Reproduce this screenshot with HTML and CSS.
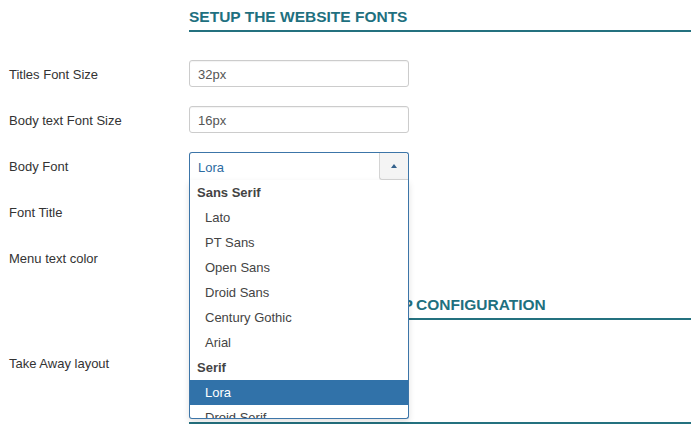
FILE: index.html
```html
<!DOCTYPE html>
<html lang="en">
<head>
  <meta charset="UTF-8">
  <meta name="viewport" content="width=device-width, initial-scale=1">
  <title>Website Fonts</title>
  <link rel="stylesheet" href="styles.css">
</head>
<body>

<form class="settings">
  <h3 class="section-title first">Setup the website fonts</h3>

  <div class="row">
    <label>Titles Font Size</label>
    <input class="field" type="text" value="32px">
  </div>

  <div class="row">
    <label>Body text Font Size</label>
    <input class="field" type="text" value="16px">
  </div>

  <div class="row">
    <label>Body Font</label>
    <div class="chosen open">
      <div class="chosen-single">
        <span>Lora</span>
        <b class="chosen-arrow"></b>
      </div>
      <ul class="chosen-results">
        <li class="group">Sans Serif</li>
        <li>Lato</li>
        <li>PT Sans</li>
        <li>Open Sans</li>
        <li>Droid Sans</li>
        <li>Century Gothic</li>
        <li>Arial</li>
        <li class="group">Serif</li>
        <li class="active">Lora</li>
        <li>Droid Serif</li>
        <li>Playfair Display</li>
      </ul>
    </div>
  </div>

  <div class="row">
    <label>Font Title</label>
    <input class="field" type="text" value="">
  </div>

  <div class="row">
    <label>Menu text color</label>
    <input class="field" type="text" value="">
  </div>

  <h3 class="section-title second">Setup the take away shop configuration</h3>

  <div class="row">
    <label>Take Away layout</label>
    <input class="field" type="text" value="">
  </div>

  <h3 class="section-title third">&nbsp;</h3>
</form>

</body>
</html>
```

FILE: styles.css
```css
body {
  margin: 0;
  font-family: "Liberation Sans", Arial, sans-serif;
  font-size: 13px;
  color: #333;
  background: #fff;
}

.settings {
  padding-left: 9px;
}

.section-title {
  margin: 0 0 0 180px;
  padding-bottom: 4px;
  font-size: 15.5px;
  line-height: 18px;
  font-weight: bold;
  text-transform: uppercase;
  color: #1e7080;
  border-bottom: 2px solid #24717f;
  white-space: nowrap;
}

.section-title.first {
  margin-top: 8px;
  margin-bottom: 28px;
}

.section-title.second {
  margin-top: 25px;
  margin-bottom: 29px;
  word-spacing: -1px;
}

.section-title.third {
  margin-top: 24px;
}

.row {
  display: flex;
  align-items: center;
  height: 27px;
  margin-bottom: 19px;
}

.row:last-of-type {
  margin-bottom: 0;
}

.row label {
  width: 180px;
  flex-shrink: 0;
  padding-top: 2px;
}

.field {
  box-sizing: border-box;
  width: 220px;
  height: 27px;
  padding: 2px 8px 0;
  border: 1px solid #ccc;
  border-radius: 3px;
  font-family: inherit;
  font-size: 13px;
  color: #555;
  box-shadow: inset 0 1px 1px rgba(0,0,0,0.05);
}

/* dropdown, open state */
.chosen {
  position: relative;
  width: 220px;
  height: 27px;
  z-index: 10;
}

.chosen-single {
  box-sizing: border-box;
  height: 28px;
  padding: 1px 0 0 8px;
  border: 1px solid #3c75a8;
  border-bottom: none;
  border-radius: 3px 3px 0 0;
  background: #fff;
  color: #2d6ba1;
  line-height: 27px;
  position: relative;
}

.chosen-arrow {
  position: absolute;
  top: 0;
  right: 0;
  width: 28px;
  height: 26px;
  background: #f4f4f4;
  border-left: 1px solid #d4d4d4;
  border-bottom: 1px solid #d4d4d4;
  border-radius: 0 3px 0 3px;
}

.chosen-arrow::after {
  content: "";
  position: absolute;
  left: 11px;
  top: 11px;
  border-left: 3px solid transparent;
  border-right: 3px solid transparent;
  border-bottom: 4px solid #34618c;
}

.chosen-results {
  position: absolute;
  top: 28px;
  left: 0;
  box-sizing: border-box;
  width: 220px;
  height: 239px;
  margin: 0;
  padding: 0;
  list-style: none;
  overflow: hidden;
  background: #fff;
  border: 1px solid #3c75a8;
  border-top: none;
  border-radius: 0 0 3px 3px;
  box-shadow: 0 3px 6px rgba(0,0,0,0.12);
}

.chosen-results li {
  box-sizing: border-box;
  height: 25px;
  line-height: 24px;
  padding: 1px 0 0 15px;
  color: #444;
}

.chosen-results li.group {
  padding-left: 7px;
  font-weight: bold;
  color: #444;
}

.chosen-results li.active {
  background: #3172a9;
  color: #fff;
}
```
